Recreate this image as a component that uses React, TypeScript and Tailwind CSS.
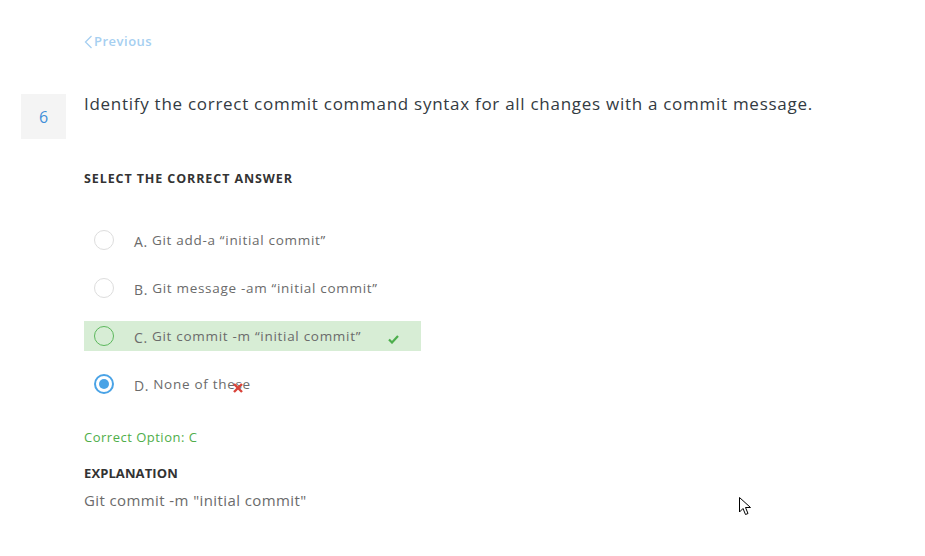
import React from "react";

const font = { fontFamily: '"Open Sans", "Liberation Sans", sans-serif' };

function Radio({ state }: { state: "empty" | "correct" | "selected" }) {
  if (state === "selected") {
    return (
      <div className="w-[20px] h-[20px] rounded-full border-2 border-[#4aa3e6] flex items-center justify-center bg-white">
        <div className="w-[10px] h-[10px] rounded-full bg-[#4aa3e6]" />
      </div>
    );
  }
  if (state === "correct") {
    return <div className="w-[20px] h-[20px] rounded-full border border-[#5cb85c]" />;
  }
  return <div className="w-[20px] h-[20px] rounded-full border border-[#dddddd] bg-white" />;
}

function Option({
  letter,
  text,
  state,
  extra,
}: {
  letter: string;
  text: React.ReactNode;
  state: "empty" | "correct" | "selected";
  extra?: React.ReactNode;
}) {
  return (
    <div
      className={`w-[337px] h-[30px] flex items-center pl-[10px] ${
        state === "correct" ? "bg-[#d7edd5]" : ""
      }`}
    >
      <Radio state={state} />
      <div className="ml-[20px] text-[13.5px] text-[#6b6b6b] tracking-[0.7px] flex items-center">
        <span className="text-[14px] mr-[4px] translate-y-[1px]">{letter}.</span>
        {text}
      </div>
      {extra}
    </div>
  );
}

export default function App() {
  return (
    <div className="relative w-[925px] h-[556px] bg-white" style={font}>
      <div className="pt-[32px] pl-[21px]">
        <div className="pl-[63px] h-[20px] flex items-center text-[13px] font-semibold tracking-[0.5px] text-[#a6cff1]">
          <svg width="9" height="14" viewBox="0 0 9 14" className="mr-[1px]">
            <path d="M7.5 1 L1.5 7 L7.5 13" fill="none" stroke="#a6cff1" strokeWidth="1.3" />
          </svg>
          Previous
        </div>
        <div className="flex mt-[42px] gap-[18px]">
          <div className="w-[45px] h-[45px] bg-[#f4f4f4] flex items-center justify-center text-[16px] text-[#3f8fd9]">
            6
          </div>
          <div className="text-[17px] text-[#333a42] tracking-[0.72px] leading-[20px]">
            Identify the correct commit command syntax for all changes with a commit message.
          </div>
        </div>
        <div className="pl-[63px]">
          <div className="mt-[32px] text-[12.5px] font-bold text-[#333] tracking-[0.9px] leading-[16px]">
            SELECT THE CORRECT ANSWER
          </div>
          <div className="mt-[38px] flex flex-col gap-[18px]">
            <Option letter="A" text="Git add-a “initial commit”" state="empty" />
            <Option letter="B" text="Git message -am “initial commit”" state="empty" />
            <Option
              letter="C"
              text="Git commit -m “initial commit”"
              state="correct"
              extra={
                <svg width="11" height="9" viewBox="0 0 11 9" className="ml-[27px] mt-[6px]">
                  <path d="M1 4.5 L4 7.5 L10 1" fill="none" stroke="#4cae4c" strokeWidth="2.2" />
                </svg>
              }
            />
            <Option
              letter="D"
              text={
                <span className="relative">
                  None of these
                  <svg width="10" height="10" viewBox="0 0 10 10" className="absolute left-[80px] top-[9px]">
                    <path d="M1 1 L9 9 M9 1 L1 9" stroke="#d9433a" strokeWidth="2.4" />
                  </svg>
                </span>
              }
              state="selected"
            />
          </div>
          <div className="mt-[30px] text-[13px] text-[#4fae4a] tracking-[0.5px] leading-[16px]">Correct Option: C</div>
          <div className="mt-[20px] text-[13px] font-bold text-[#333] tracking-[0.1px] leading-[16px]">EXPLANATION</div>
          <div className="mt-[9px] text-[15px] text-[#6b6b6b] tracking-[0.4px] leading-[20px]">
            Git commit -m "initial commit"
          </div>
        </div>
      </div>
      <svg width="14" height="20" viewBox="0 0 14 20" className="absolute left-[739px] top-[497px]">
        <path
          d="M0.5 0.5 L0.5 15 L4 11.5 L6.5 17.5 L9 16.5 L6.5 10.5 L11.5 10.5 Z"
          fill="white"
          stroke="#000"
          strokeWidth="1"
        />
      </svg>
    </div>
  );
}
